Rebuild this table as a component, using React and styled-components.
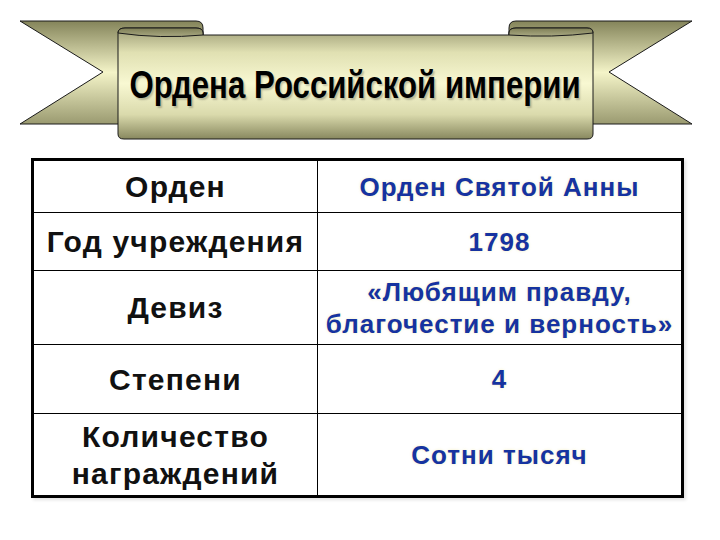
import styled, { createGlobalStyle } from "styled-components";

const GlobalStyle = createGlobalStyle`
  html, body {
    margin: 0;
    padding: 0;
    background: #fff;
  }
  body {
    font-family: "Liberation Sans", Arial, sans-serif;
  }
`;

const rows = [
  { label: ["Орден"], value: ["Орден Святой Анны"] },
  { label: ["Год учреждения"], value: ["1798"] },
  { label: ["Девиз"], value: ["«Любящим правду,", "благочестие и верность»"] },
  { label: ["Степени"], value: ["4"] },
  { label: ["Количество", "награждений"], value: ["Сотни тысяч"] },
];

function Ribbon() {
  return (
    <RibbonArt viewBox="18 20 676 120" width="676" height="120">
      <defs>
        <linearGradient id="tail" x1="0" y1="0" x2="0" y2="1">
          <stop offset="0" stopColor="#84845a" />
          <stop offset="0.5" stopColor="#f4f4c8" />
          <stop offset="1" stopColor="#9a9a70" />
        </linearGradient>
        <linearGradient id="front" x1="0" y1="0" x2="0" y2="1">
          <stop offset="0" stopColor="#9d9d76" />
          <stop offset="0.22" stopColor="#e0e0b2" />
          <stop offset="0.5" stopColor="#f8f8d2" />
          <stop offset="0.78" stopColor="#dadaac" />
          <stop offset="1" stopColor="#88885f" />
        </linearGradient>
        <linearGradient id="curl" x1="0" y1="0" x2="0" y2="1">
          <stop offset="0" stopColor="#7e7e56" />
          <stop offset="1" stopColor="#a9a982" />
        </linearGradient>
      </defs>
      <g stroke="#1a1a1a" strokeWidth="1" strokeLinejoin="round">
        <path d="M20,21 L196,21 Q203,21 203,28 L203,124 L20,124 L103,72 Z" fill="url(#tail)" />
        <path d="M692,21 L516,21 Q509,21 509,28 L509,124 L692,124 L609,72 Z" fill="url(#tail)" />
        <path
          d="M118,33 Q118,28 125,28 L196,28 Q203,28 203,33 L203,35 L509,35 L509,33 Q509,28 516,28 L587,28 Q593,28 593,33 L593,134 Q593,139 587,139 L124,139 Q118,139 118,134 Z"
          fill="url(#front)"
        />
        <path d="M118,33 Q118,28 125,28 L196,28 Q203,28 203,33 L203,35 Q160,39 118,33 Z" fill="url(#curl)" />
        <path d="M509,35 L509,33 Q509,28 516,28 L587,28 Q593,28 593,33 Q552,38 509,35 Z" fill="url(#curl)" />
      </g>
    </RibbonArt>
  );
}

export default function App() {
  return (
    <>
      <GlobalStyle />
      <Page>
        <Banner>
          <Ribbon />
          <Title>
            <TitleText>Ордена Российской империи</TitleText>
          </Title>
        </Banner>
        <Table>
          {rows.map((row, i) => (
            <Row key={i}>
              <Label>
                {row.label.map((line) => (
                  <span key={line}>{line}</span>
                ))}
              </Label>
              <Value>
                {row.value.map((line) => (
                  <span key={line}>{line}</span>
                ))}
              </Value>
            </Row>
          ))}
        </Table>
      </Page>
    </>
  );
}

const Page = styled.div`
  width: 720px;
  height: 540px;
  box-sizing: border-box;
  padding-top: 20px;
  overflow: hidden;
`;

const Banner = styled.div`
  position: relative;
  width: 676px;
  height: 120px;
  margin-left: 18px;
  box-sizing: border-box;
  padding: 15px 0 0 100px;
`;

const RibbonArt = styled.svg`
  position: absolute;
  left: 0;
  top: 0;
  overflow: visible;
`;

const Title = styled.div`
  position: relative;
  width: 475px;
  height: 100px;
  display: flex;
  align-items: center;
  justify-content: center;
`;

const TitleText = styled.span`
  display: inline-block;
  font-family: "Liberation Sans", Arial, sans-serif;
  font-weight: 700;
  font-size: 38px;
  color: #000;
  text-shadow: 2px 2px 2px rgba(0, 0, 0, 0.22);
  white-space: nowrap;
  transform: scaleX(0.82);
`;

const Table = styled.div`
  margin: 18px 0 0 31px;
  width: 653px;
  box-sizing: border-box;
  border: 3px solid #000;
  background: #000;
  display: grid;
  grid-template-columns: 283px 363px;
  grid-template-rows: 51px 57px 73px 68px 81px;
  row-gap: 1px;
  column-gap: 1px;
  box-shadow: 2px 2px 3px rgba(0, 0, 0, 0.12);
`;

const Row = styled.div`
  display: contents;
`;

const Cell = styled.div`
  background: #fff;
  display: flex;
  flex-direction: column;
  align-items: center;
  justify-content: center;
  text-align: center;
  font-weight: 700;
  white-space: nowrap;
`;

const Label = styled(Cell)`
  font-size: 30px;
  line-height: 37px;
  letter-spacing: 1.2px;
  color: #111;
`;

const Value = styled(Cell)`
  font-size: 26px;
  line-height: 32px;
  letter-spacing: 1px;
  color: #1633a0;
  text-shadow: 0 0 3px rgba(230, 220, 120, 0.45);
`;
